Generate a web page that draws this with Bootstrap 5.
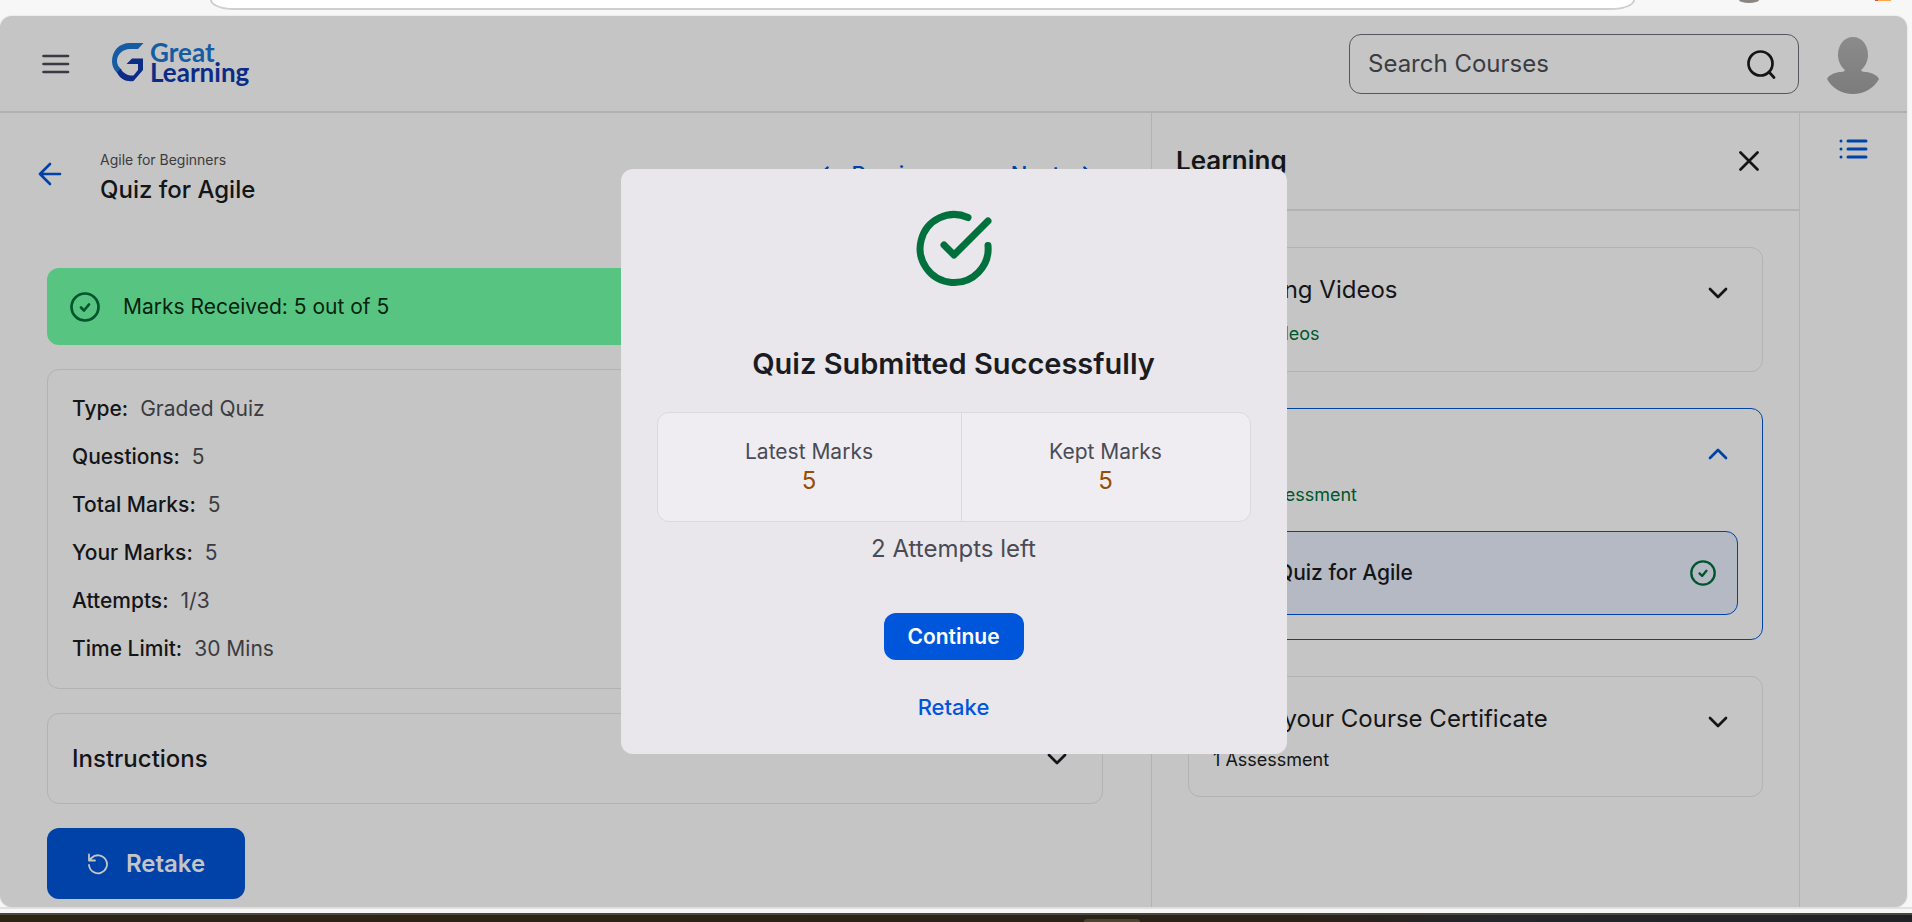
<!DOCTYPE html>
<html lang="en">
<head>
<meta charset="utf-8">
<meta name="viewport" content="width=device-width, initial-scale=1">
<title>Quiz for Agile</title>
<link href="https://cdn.jsdelivr.net/npm/bootstrap@5.3.0/dist/css/bootstrap.min.css" rel="stylesheet">
<style>
  :root { --ink:#141517; --muted-ink:#3b3c42; --brand:#0042a8; --line:#b2b2b2; --surface:#c5c5c5; --ok:#00562c; }
  body { font-family: Inter, "Liberation Sans", sans-serif; font-size:21px; line-height:24px; color:var(--ink); background:#f7f7f7; }
  svg { display:block; flex:none; }
  .stroke-icon { fill:none; stroke:currentColor; stroke-linecap:round; stroke-linejoin:round; }
  a { color:var(--brand); text-decoration:none; }
  .plain-btn { background:none; border:0; padding:0; color:inherit; }

  .chrome-top { height:16px; }
  .chrome-top > * { flex:none; }
  .omnibox { height:10px; margin-left:11%; width:74.5%; background:#fff; border:2px solid #cfcfcf; border-top:0; border-radius:0 0 24px 24px / 0 0 10px 10px; }
  .chrome-dot { width:20px; height:3px; margin-left:104px; background:#8c8581; border-radius:0 0 10px 10px / 0 0 3px 3px; }
  .chrome-tag { width:16px; height:1px; margin-left:116px; background:linear-gradient(90deg,#f04848 20%,#ffa64d 20%); }
  .chrome-foot { height:6px; background:linear-gradient(#e2e2e2 2px,#f7f7f7 2px); }
  .task-strip { height:9px; border-top:2px solid #4a483f; background:linear-gradient(90deg,#2e2416 0%,#2c2117 68%,#24262b 78%,#202228 100%); }
  .task-tab { width:56px; height:3px; margin:4px 0 0 56.7%; background:#4b4530; border-radius:6px 6px 0 0; }

  .app-shell { background:var(--surface); border-radius:12px; margin-right:5px; box-shadow:0 0 2px #d0d0d0; }
  .app-head { height:97px; border-bottom:2px solid #b1b1b1; padding:1px 28px 0 42px; }
  .brand-link { gap:6px; margin-left:42px; padding-bottom:4px; }
  .brand-word { font-size:26px; font-weight:700; line-height:20px; color:#155ca4; font-family:Lato, Inter, sans-serif; }
  .brand-word b { color:#0c2b86; font-weight:700; }
  .search-box { width:450px; height:60px; border:1px solid #55565e; border-radius:12px; padding:0 22px 0 18px; }
  .search-box input { font-size:24px; border:0; padding:0; background:none; box-shadow:none; color:var(--muted-ink); }
  .search-box input::placeholder { color:var(--muted-ink); opacity:1; }
  .search-box input:focus { background:none; box-shadow:none; }

  .main-pane { padding:0 48px 0 47px; }
  .title-row { height:123px; margin-left:-9px; padding:0 11px 2px 0; gap:38px; }
  .title-block { padding-top:8px; }
  .crumb { font-size:14px; line-height:20px; margin-bottom:4px; color:var(--muted-ink); }
  .h-page { font-size:24px; line-height:32px; font-weight:500; }
  .pager { gap:68px; font-size:22px; font-weight:500; }
  .pager a { gap:23px; }
  .soft-card { border:1px solid var(--line); border-radius:12px; }
  .ok-bar { height:77px; margin-top:32px; background:#57c581; border-radius:12px; padding:0 23px; gap:23px; color:#07230f; }
  .facts { margin-top:24px; padding:15px 24px; }
  .facts dl > div { height:48px; gap:12px; }
  .facts dt { font-weight:500; }
  .facts dd { color:var(--muted-ink); }
  .instr { margin-top:24px; height:91px; padding:0 34px 0 24px; font-size:24px; font-weight:500; border:1px solid var(--line); }
  .btn-retake { margin-top:24px; width:198px; height:71px; background:var(--brand); color:#c5c5c5; border:0; border-radius:12px; font-size:24px; font-weight:600; gap:17px; }

  .side-pane { width:649px; border-left:1px solid var(--line); border-right:1px solid var(--line); }
  .side-head { height:98px; border-bottom:2px solid var(--line); padding:0 40px 0 24px; font-size:26px; font-weight:600; }
  .side-list { padding:36px; gap:36px; }
  .module { padding:24px; font-size:24px; line-height:32px; }
  .module.is-open { border-color:var(--brand); color:var(--brand); }
  .module-top { height:36px; padding-right:9px; }
  .module-top svg { margin-top:5px; }
  .module-sub { font-size:18px; line-height:24px; margin-top:11px; }
  .module-sub.done { gap:9px; margin:14px 0 1px; }
  .done { color:var(--ok); }
  .lesson { height:84px; margin-top:24px; background:#b4b9c4; border:1px solid var(--brand); border-radius:12px; padding:0 21px 0 63px; font-size:21px; font-weight:500; color:var(--ink); }
  .rail { width:107px; padding-top:24px; }

  .overlay { inset:0; }
  .dialog-card { width:666px; height:585px; background:#e9e7ec; border-radius:12px; padding:38px 36px 0; color:#1b1c22; }
  .dialog-card > * { flex:none; }
  .h-dialog { font-size:29px; line-height:40px; font-weight:600; margin:49px 0 28px; }
  .score-table { width:100%; height:110px; margin:0; table-layout:fixed; border:1px solid #dad9de; border-radius:12px; background:#efedf2; border-collapse:separate; border-spacing:0; }
  .score-table th, .score-table td { font-weight:400; color:#4a4b54; }
  .score-table th { padding:24px 0 0; line-height:29px; vertical-align:bottom; }
  .score-table td { padding:0 0 26px; font-size:24px; line-height:29px; color:#954f05; }
  .score-table tr > :first-child { width:304px; border-right:1px solid #dad9de; }
  .left-note { font-size:24px; line-height:32px; color:#4a4b54; margin:11px 0 48px; }
  .btn-continue { width:140px; height:47px; background:#0056db; color:#fff; border:0; border-radius:12px; font-size:21px; font-weight:600; }
  .btn-again { color:#0056db; font-weight:500; font-size:22px; margin-top:35px; }
</style>
</head>
<body class="d-flex flex-column vh-100 overflow-hidden">
  <div class="chrome-top d-flex flex-shrink-0">
    <div class="omnibox"></div><div class="chrome-dot"></div><div class="chrome-tag"></div>
  </div>

  <div class="app-shell position-relative d-flex flex-column flex-grow-1 overflow-hidden">
    <header class="app-head d-flex align-items-center flex-shrink-0">
      <button class="plain-btn" type="button" aria-label="Menu">
        <svg class="stroke-icon" width="28" height="20" viewBox="0 0 28 20" color="#3b3944" stroke-width="2.700"><path d="M1.500 2H26M1.500 10H26M1.500 18H26"/></svg>
      </button>
      <a href="#" class="brand-link d-flex align-items-center" aria-label="Great Learning home">
        <svg width="32" height="40" viewBox="0 0 32 40">
          <path fill="#155ca4" d="M31.500 1H18C7 1 0 9 0 19.500 0 24 2 28 5 31l5-3C7 25.500 5 23 5 19 5 12 11 7 18 7h8z"/>
          <path fill="#0c2b86" d="M20 16.500h11V28l-9.500 11C14 40 8 37 5 30.500L8.500 27C12 32 17 34 21.500 33.500L26 28v-6H14.500z"/>
        </svg>
        <span class="brand-word d-flex flex-column"><span>Great</span><b>Learning</b></span>
      </a>
      <form class="search-box d-flex align-items-center ms-auto" role="search">
        <input class="form-control" type="search" placeholder="Search Courses" aria-label="Search Courses">
        <button class="plain-btn" type="button" aria-label="Search">
          <svg class="stroke-icon" width="30" height="30" viewBox="0 0 30 30" stroke-width="2.700"><circle cx="14.500" cy="14.500" r="12"/><path d="M23 23L28 28.500"/></svg>
        </button>
      </form>
      <svg class="ms-4 ps-1 mt-1" width="56" height="58" viewBox="0 0 52 58" role="img" aria-label="Profile">
        <defs><linearGradient id="av" x1="0" x2="0" y1="0" y2="1"><stop offset="0" stop-color="#8b8b8b"/><stop offset="1" stop-color="#7c7c7c"/></linearGradient></defs>
        <path fill="url(#av)" d="M26 0c9 0 15 8 15 18 0 6-3 12-7 15 1 2 3 2 6 2 5 1 10 3 12 7-5 9-15 15-26 15S5 51 0 42c2-4 7-6 12-7 3 0 5 0 6-2-4-3-7-9-7-15C11 8 17 0 26 0z"/>
      </svg>
    </header>

    <div class="d-flex flex-grow-1">
      <main class="main-pane flex-grow-1">
        <div class="title-row d-flex align-items-center">
          <a href="#" aria-label="Back"><svg class="stroke-icon" width="24" height="24" viewBox="0 0 24 24" stroke-width="2.700"><path d="M22 12H2M12 2L2 12l10 10"/></svg></a>
          <div class="title-block"><div class="crumb">Agile for Beginners</div><h1 class="h-page m-0">Quiz for Agile</h1></div>
          <nav class="pager ms-auto d-flex" aria-label="Lesson">
            <a href="#" class="d-flex align-items-center"><svg class="stroke-icon" width="9" height="16" viewBox="0 0 9 16" stroke-width="2.500"><path d="M7.500 1.500L1.500 8l6 6.500"/></svg><span>Previous</span></a>
            <a href="#" class="d-flex align-items-center"><span>Next</span><svg class="stroke-icon" width="9" height="16" viewBox="0 0 9 16" stroke-width="2.500"><path d="M1.500 1.500l6 6.500-6 6.500"/></svg></a>
          </nav>
        </div>
        <div class="ok-bar d-flex align-items-center">
          <svg class="stroke-icon done" width="30" height="30" viewBox="0 0 30 30" stroke-width="2.700"><circle cx="15" cy="15" r="13.500"/><path d="M11 15.500l3 3 5-6"/></svg>
          <span>Marks Received: 5 out of 5</span>
        </div>
        <section class="soft-card facts">
          <dl class="m-0">
            <div class="d-flex align-items-center"><dt>Type:</dt><dd class="m-0">Graded Quiz</dd></div>
            <div class="d-flex align-items-center"><dt>Questions:</dt><dd class="m-0">5</dd></div>
            <div class="d-flex align-items-center"><dt>Total Marks:</dt><dd class="m-0">5</dd></div>
            <div class="d-flex align-items-center"><dt>Your Marks:</dt><dd class="m-0">5</dd></div>
            <div class="d-flex align-items-center"><dt>Attempts:</dt><dd class="m-0">1/3</dd></div>
            <div class="d-flex align-items-center"><dt>Time Limit:</dt><dd class="m-0">30 Mins</dd></div>
          </dl>
        </section>
        <button type="button" class="plain-btn soft-card instr w-100 d-flex align-items-center justify-content-between">
          <span>Instructions</span>
          <svg class="stroke-icon" width="22" height="14" viewBox="0 0 22 14" stroke-width="2.700"><path d="M3 3l8 8 8-8"/></svg>
        </button>
        <button type="button" class="btn btn-retake d-flex align-items-center justify-content-center">
          <svg class="stroke-icon" width="22" height="22" viewBox="0 0 22 22" stroke-width="1.800"><path d="M2 12a9 9 0 1 0 2.500-7L2 7.500M2 1.500v6h6"/></svg>
          <span>Retake</span>
        </button>
      </main>

      <aside class="side-pane flex-shrink-0">
        <div class="side-head d-flex align-items-center justify-content-between">
          <span>Learning</span>
          <button class="plain-btn" type="button" aria-label="Close"><svg class="stroke-icon" width="20" height="20" viewBox="0 0 20 20" stroke-width="2.700"><path d="M1.500 1.500l17 17M18.500 1.500l-17 17"/></svg></button>
        </div>
        <div class="side-list d-flex flex-column">
          <section class="soft-card module">
            <div class="module-top d-flex align-items-center justify-content-between"><span>Learning Videos</span>
              <svg class="stroke-icon" width="22" height="14" viewBox="0 0 22 14" stroke-width="2.700"><path d="M3 3l8 8 8-8"/></svg></div>
            <div class="module-sub done d-flex"><span>3 / 3</span><span>Videos</span></div>
          </section>
          <section class="soft-card module is-open">
            <div class="module-top d-flex align-items-center justify-content-between"><span>Quiz</span>
              <svg class="stroke-icon" width="22" height="14" viewBox="0 0 22 14" stroke-width="2.700"><path d="M3 11l8-8 8 8"/></svg></div>
            <div class="module-sub done d-flex"><span>1 / 1</span><span>Assessment</span></div>
            <a href="#" class="lesson d-flex align-items-center justify-content-between"><span>Quiz for Agile</span>
              <svg class="stroke-icon done" width="26" height="26" viewBox="0 0 30 30" stroke-width="2.700"><circle cx="15" cy="15" r="13.500"/><path d="M11 15.500l3 3 5-6"/></svg></a>
          </section>
          <section class="soft-card module">
            <div class="module-top d-flex align-items-center justify-content-between"><span>Claim your Course Certificate</span>
              <svg class="stroke-icon" width="22" height="14" viewBox="0 0 22 14" stroke-width="2.700"><path d="M3 3l8 8 8-8"/></svg></div>
            <div class="module-sub">1 Assessment</div>
          </section>
        </div>
      </aside>

      <nav class="rail d-flex justify-content-center flex-shrink-0" aria-label="Panels">
        <a href="#" aria-label="Contents"><svg class="stroke-icon" width="29" height="24" viewBox="0 0 29 24" stroke-width="3"><path d="M9 4h18M9 12h18M9 20h18M2 4h.010M2 12h.010M2 20h.010"/></svg></a>
      </nav>
    </div>

    <div class="overlay position-absolute d-flex align-items-center justify-content-center">
      <div class="dialog-card d-flex flex-column align-items-center" role="dialog" aria-labelledby="dlg">
        <svg width="88" height="88" viewBox="0 0 88 88" fill="none" stroke="#00703c" stroke-width="7" stroke-linecap="round" stroke-linejoin="round"><path d="M78 38.500A34 34 0 1 1 58 10.500M78 14L44 48 34 38"/></svg>
        <h2 class="h-dialog" id="dlg">Quiz Submitted Successfully</h2>
        <table class="score-table text-center">
          <thead><tr><th scope="col">Latest Marks</th><th scope="col">Kept Marks</th></tr></thead>
          <tbody><tr><td>5</td><td>5</td></tr></tbody>
        </table>
        <p class="left-note">2 Attempts left</p>
        <button type="button" class="btn btn-continue p-0">Continue</button>
        <button type="button" class="plain-btn btn-again">Retake</button>
      </div>
    </div>
  </div>

  <div class="chrome-foot flex-shrink-0"></div>
  <div class="task-strip flex-shrink-0 overflow-hidden"><div class="task-tab"></div></div>
<script src="https://cdn.jsdelivr.net/npm/bootstrap@5.3.0/dist/js/bootstrap.bundle.min.js"></script>
</body>
</html>
